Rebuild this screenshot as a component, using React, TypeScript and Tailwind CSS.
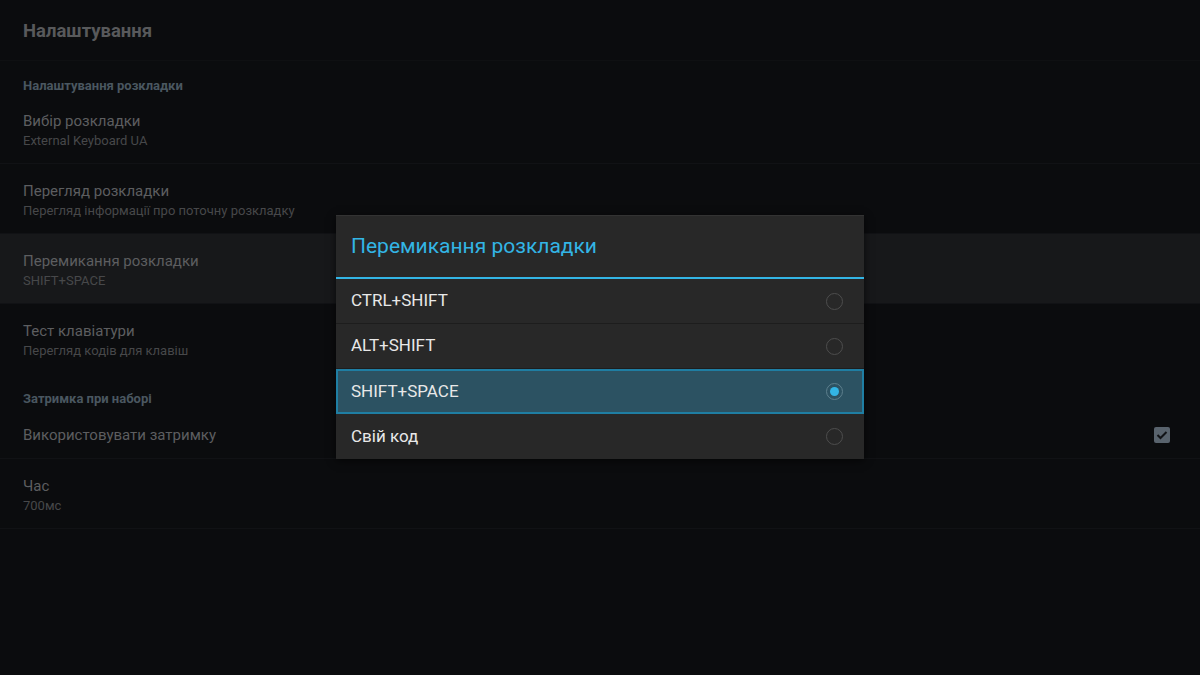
import React from 'react';

type Pref = {
  title: string;
  summary?: string;
  highlight?: boolean;
  checkbox?: boolean;
};

const groups: { category: string; items: Pref[] }[] = [
  {
    category: 'Налаштування розкладки',
    items: [
      { title: 'Вибір розкладки', summary: 'External Keyboard UA' },
      { title: 'Перегляд розкладки', summary: 'Перегляд інформації про поточну розкладку' },
      { title: 'Перемикання розкладки', summary: 'SHIFT+SPACE', highlight: true },
      { title: 'Тест клавіатури', summary: 'Перегляд кодів для клавіш' },
    ],
  },
  {
    category: 'Затримка при наборі',
    items: [
      { title: 'Використовувати затримку', checkbox: true },
      { title: 'Час', summary: '700мс' },
    ],
  },
];

const options = ['CTRL+SHIFT', 'ALT+SHIFT', 'SHIFT+SPACE', 'Свій код'];
const selected = 2;

const Radio = ({ checked }: { checked: boolean }) =>
  checked ? (
    <span className="w-[17px] h-[17px] rounded-full border-[1.5px] border-[#5d7f8d] flex items-center justify-center">
      <span className="w-[9px] h-[9px] rounded-full bg-[#33b5e5]" />
    </span>
  ) : (
    <span className="w-[17px] h-[17px] rounded-full border-[1.5px] border-[#4d4d4d]" />
  );

const PrefRow = ({ pref, divider }: { pref: Pref; divider: boolean }) => (
  <div
    className={`flex items-center justify-between pl-[23px] pr-[30px] ${
      pref.summary ? 'h-[70px] pt-[3px]' : 'h-[52px] pt-[4px]'
    } ${pref.highlight ? 'bg-[#17181a]' : ''} ${divider ? 'border-b border-[#111215]' : ''}`}
  >
    <div className="flex flex-col">
      <span className="text-[15px] leading-[20px] text-[#5d5e60]">{pref.title}</span>
      {pref.summary && (
        <span className="text-[13px] leading-[19px] text-[#47484a]">{pref.summary}</span>
      )}
    </div>
    {pref.checkbox && (
      <span className="w-[16px] h-[16px] rounded-[2px] bg-[#59636d] flex items-center justify-center">
        <svg width="12" height="10" viewBox="0 0 12 10">
          <path d="M1.5 5 L4.5 8 L10.5 2" fill="none" stroke="#111316" strokeWidth="2" />
        </svg>
      </span>
    )}
  </div>
);

const App = () => {
  return (
    <div
      className="relative w-[1200px] h-[675px] bg-[#0b0c0e] overflow-hidden"
      style={{ fontFamily: 'Roboto, "Noto Sans", sans-serif' }}
    >
      <div className="h-[61px] flex items-center pl-[23px] pt-[3px] border-b border-[#0f1012]">
        <h1 className="text-[18.5px] font-bold text-[#58595b]">Налаштування</h1>
      </div>

      {groups.map((g, gi) => (
        <div key={g.category}>
          <div className="h-[33px] pt-[16px] pl-[23px] leading-[16px]">
            <span className="text-[13px] font-bold text-[#4a5760]">{g.category}</span>
          </div>
          {g.items.map((p, i) => (
            <PrefRow
              key={p.title}
              pref={p}
              divider={!(gi === 0 && i === g.items.length - 1)}
            />
          ))}
        </div>
      ))}

      {/* dialog */}
      <div className="absolute left-[336px] top-[215px] w-[528px] bg-[#282828] border-t border-[#333] shadow-[0_2px_8px_rgba(0,0,0,0.6)]">
        <div className="h-[61px] flex items-center px-[15px]">
          <span className="text-[21px] text-[#33b5e5]">Перемикання розкладки</span>
        </div>
        <div className="h-[2px] bg-[#33b5e5]" />
        {options.map((o, i) =>
          i === selected ? (
            <div
              key={o}
              className="h-[45px] flex items-center justify-between pl-[13px] pr-[19px] bg-[#2c5262] border-2 border-[#1f7ea3]"
            >
              <span className="text-[17px] text-[#e8e8e8]">{o}</span>
              <Radio checked />
            </div>
          ) : (
            <div
              key={o}
              className={`h-[45px] flex items-center justify-between pl-[15px] pr-[21px] ${
                i < options.length - 1 ? 'border-b border-[#1d1d1d]' : ''
              }`}
            >
              <span className="text-[17px] text-[#e8e8e8]">{o}</span>
              <Radio checked={false} />
            </div>
          )
        )}
      </div>
    </div>
  );
};

export default App;
